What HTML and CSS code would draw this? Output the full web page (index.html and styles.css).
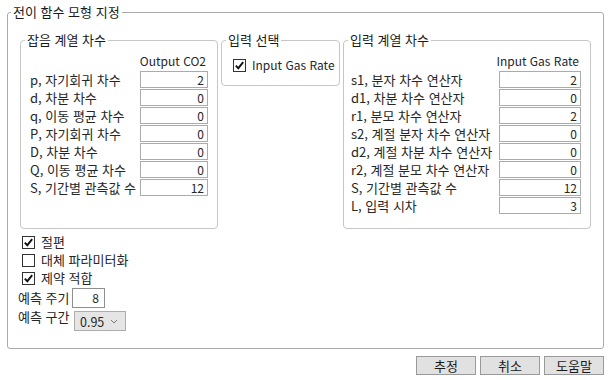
FILE: index.html
```html
<!DOCTYPE html>
<html lang="ko">
<head>
  <meta charset="UTF-8">
  <title>전이 함수 모형 지정</title>
  <link rel="stylesheet" href="styles.css">
</head>
<body>
  <div class="dialog">
    <fieldset class="outer">
      <legend>전이 함수 모형 지정</legend>
      <div class="outer-body">
        <div class="groups">
          <fieldset class="group noise">
            <legend>잡음 계열 차수</legend>
            <div class="params">
              <div></div><div class="col-head">Output CO2</div>
              <div class="lbl">p, 자기회귀 차수</div><div class="num">2</div>
              <div class="lbl">d, 차분 차수</div><div class="num">0</div>
              <div class="lbl">q, 이동 평균 차수</div><div class="num">0</div>
              <div class="lbl">P, 자기회귀 차수</div><div class="num">0</div>
              <div class="lbl">D, 차분 차수</div><div class="num">0</div>
              <div class="lbl">Q, 이동 평균 차수</div><div class="num">0</div>
              <div class="lbl">S, 기간별 관측값 수</div><div class="num">12</div>
            </div>
          </fieldset>

          <fieldset class="group pick">
            <legend>입력 선택</legend>
            <div class="pick-body">
              <label class="check latin">
                <span class="box"><svg width="11" height="11" viewBox="0 0 11 11"><path d="M1.8 5.6 L4.3 8.2 L9.2 2.2" fill="none" stroke="#111" stroke-width="1.9"/></svg></span>
                Input Gas Rate
              </label>
            </div>
          </fieldset>

          <fieldset class="group input">
            <legend>입력 계열 차수</legend>
            <div class="params wide">
              <div></div><div class="col-head">Input Gas Rate</div>
              <div class="lbl">s1, 분자 차수 연산자</div><div class="num">2</div>
              <div class="lbl">d1, 차분 차수 연산자</div><div class="num">0</div>
              <div class="lbl">r1, 분모 차수 연산자</div><div class="num">2</div>
              <div class="lbl">s2, 계절 분자 차수 연산자</div><div class="num">0</div>
              <div class="lbl">d2, 계절 차분 차수 연산자</div><div class="num">0</div>
              <div class="lbl">r2, 계절 분모 차수 연산자</div><div class="num">0</div>
              <div class="lbl">S, 기간별 관측값 수</div><div class="num">12</div>
              <div class="lbl">L, 입력 시차</div><div class="num">3</div>
            </div>
          </fieldset>
        </div>

        <div class="options">
          <label class="check">
            <span class="box"><svg width="11" height="11" viewBox="0 0 11 11"><path d="M1.8 5.6 L4.3 8.2 L9.2 2.2" fill="none" stroke="#111" stroke-width="1.9"/></svg></span>
            절편
          </label>
          <label class="check">
            <span class="box"></span>
            대체 파라미터화
          </label>
          <label class="check">
            <span class="box"><svg width="11" height="11" viewBox="0 0 11 11"><path d="M1.8 5.6 L4.3 8.2 L9.2 2.2" fill="none" stroke="#111" stroke-width="1.9"/></svg></span>
            제약 적합
          </label>
        </div>

        <div class="forecast">
          <div class="fc-row">
            <span class="fc-lbl">예측 주기</span>
            <span class="fc-num">8</span>
          </div>
          <div class="fc-row">
            <span class="fc-lbl top">예측 구간</span>
            <span class="select">0.95
              <svg width="8" height="5" viewBox="0 0 8 5"><path d="M1 1 L4 4 L7 1" fill="none" stroke="#777" stroke-width="1"/></svg>
            </span>
          </div>
        </div>
      </div>
    </fieldset>

    <div class="buttons">
      <button>추정</button>
      <button>취소</button>
      <button>도움말</button>
    </div>
  </div>
</body>
</html>
```

FILE: styles.css
```css
body {
  margin: 0;
  background: #fff;
  font-family: "Noto Sans CJK KR", "Noto Sans", sans-serif;
  font-size: 13px;
  color: #262626;
}

.dialog {
  padding: 4px 8px 0 7px;
}

fieldset {
  margin: 0;
  padding: 0;
  min-width: 0;
}

legend {
  padding: 0 2px;
  margin-left: 3px;
  line-height: 16px;
  color: #1a1a1a;
}

.outer {
  width: 597px;
  box-sizing: border-box;
  border: 1px solid #ababab;
  border-radius: 3px;
}

.outer-body {
  padding: 12px 12px 15px 12px;
}

.groups {
  display: flex;
  gap: 3px;
  align-items: stretch;
}

.group {
  border: 1px solid #c6c6c6;
  border-radius: 4px;
  box-sizing: border-box;
}

.group legend {
  margin-left: 4px;
}

.noise {
  width: 198px;
}

.pick {
  width: 119px;
  align-self: flex-start;
}

.input {
  width: 248px;
}

.params {
  display: grid;
  grid-template-columns: 110px 68px;
  row-gap: 1px;
  padding: 5px 0 14px 9px;
}

.params.wide {
  grid-template-columns: 148px 82px;
  padding-left: 7px;
}

.col-head {
  justify-self: end;
  white-space: nowrap;
  font-size: 12px;
  line-height: 16px;
  padding-right: 2px;
  margin-bottom: 1px;
}

.latin {
  font-size: 12px;
}

.lbl {
  line-height: 17px;
  white-space: nowrap;
}

.num {
  height: 17px;
  box-sizing: border-box;
  border: 1px solid #ababab;
  background: #fff;
  text-align: right;
  padding-right: 3px;
  font-size: 12px;
  line-height: 15px;
}

.pick-body {
  padding: 8px 0 11px 11px;
}

.check {
  display: flex;
  align-items: center;
  gap: 6px;
  height: 18px;
  line-height: 16px;
  white-space: nowrap;
}

.box {
  width: 13px;
  height: 13px;
  flex: none;
  box-sizing: border-box;
  border: 1px solid #333;
  background: #fff;
  display: flex;
  align-items: center;
  justify-content: center;
}

.options {
  margin-top: 4px;
  padding-left: 2px;
}

.forecast {
  margin-top: 1px;
  margin-left: -2px;
}

.fc-row {
  display: flex;
  align-items: center;
  margin-bottom: 2px;
}

.fc-lbl {
  width: 54px;
  line-height: 16px;
  white-space: nowrap;
}

.fc-lbl.top {
  width: 56px;
  align-self: flex-start;
  line-height: 13px;
}

.fc-num {
  width: 33px;
  height: 20px;
  box-sizing: border-box;
  border: 1px solid #8f8f8f;
  background: #fff;
  text-align: right;
  padding-right: 5px;
  font-size: 12px;
  line-height: 18px;
}

.select {
  width: 52px;
  height: 20px;
  box-sizing: border-box;
  margin-top: 1px;
  border: 1px solid #adadad;
  background: #e5e5e5;
  display: flex;
  align-items: center;
  justify-content: space-between;
  padding: 0 7px 0 5px;
  font-size: 12.5px;
}

.buttons {
  display: flex;
  justify-content: flex-end;
  gap: 4px;
  margin-top: 7px;
  width: 597px;
}

button {
  width: 60px;
  height: 19px;
  padding: 0;
  border: 1px solid #9a9a9a;
  background: #e1e1e1;
  font-family: "Noto Sans CJK KR", "Noto Sans", sans-serif;
  font-size: 13px;
  color: #1a1a1a;
  line-height: 16px;
}
```
